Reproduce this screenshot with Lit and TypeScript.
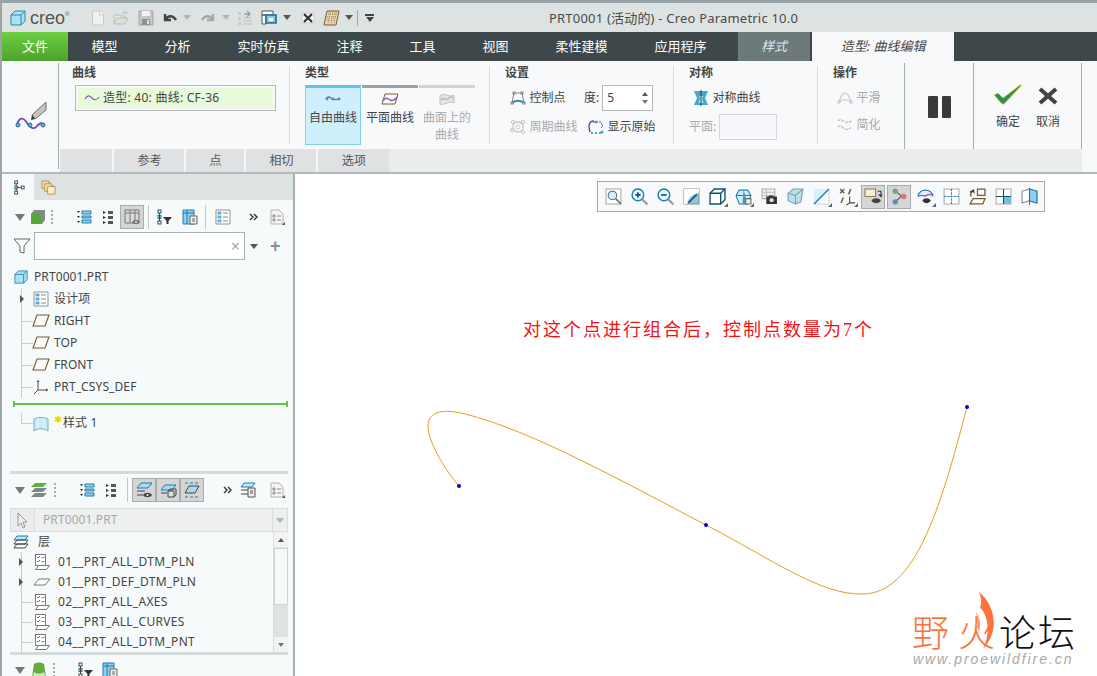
import { LitElement, html, css, svg, nothing } from "lit";
import { customElement } from "lit/decorators.js";

const blue = "#1f7fae";
const brown = "#7a5a2a";

// all icons live on a 16x16 box unless the size class scales them
const ic = (body: unknown, cls = "") => html`<svg class="ic ${cls}" viewBox="0 0 16 16">${body}</svg>`;

// a row of tools, each given by the x where it starts
const tools = (items: [unknown, number][]) =>
  items.map(([c, x], i) => {
    const next = items[i + 1] ? items[i + 1][1] : x + 24;
    return html`<span class="slot" style="width:${next - x}px">${c}</span>`;
  });

const icons = {
  cube: svg`<path d="M1 5l4-4h10v10l-4 4H1z" fill="#a9e2f7" stroke="#2a86ad"/><path d="M1 5h10v10M11 5l4-4" fill="none" stroke="#2a86ad"/>`,
  doc: svg`<path d="M2.500 1h7l4 4v10h-11z" fill="#f1f1ef" stroke="#c9c9c5"/><path d="M9.500 1v4h4" fill="#fff" stroke="#c9c9c5"/>`,
  open: svg`<path d="M1 14V5h5l1 1h5v2" fill="#e8e8e4" stroke="#bdbdb8"/><path d="M1 14l3-6h11l-3 6z" fill="#dededa" stroke="#bdbdb8"/><path d="M9 4l3-3v2h3" fill="none" stroke="#bdbdb8"/>`,
  save: svg`<path d="M1 1h14v14H1z" fill="#c4c7c8" stroke="#a2a5a6"/><path d="M4 1h8v5H4z" fill="#f1f1f1"/><path d="M4 9h8v6H4z" fill="#8f9394"/><path d="M9 10h2v4H9z" fill="#e2e2e2"/>`,
  undo: svg`<path d="M3 4v6h6M3.500 9.500C6 5 11 5 14 10" fill="none" stroke="#444" stroke-width="2.400"/>`,
  redo: svg`<path d="M13 4v6H7M12.500 9.500C10 5 5 5 2 10" fill="none" stroke="#a4a8a9" stroke-width="2.400"/>`,
  regen: svg`<path d="M1 2h3v3H1zM1 7h3v3H1zM1 12h3v3H1z" fill="#c8cbcb"/><path d="M6 8h9M6 11h9M6 14h9" stroke="#b9bcbc"/><path d="M7 4h6M10 1l3 3-3 3" fill="none" stroke="#9a9d9d" stroke-width="1.400"/>`,
  win: svg`<path d="M1 1h11v4H1zM1 5h4v9H1z" fill="#fff" stroke="#555"/><path d="M5 5h10v8H5z" fill="#8cc7e4" stroke="#1c6f99" stroke-width="1.600"/><path d="M8 8h4v3H8z" fill="#fff"/>`,
  closeWin: svg`<path d="M2 3h12v10H2z" fill="#f4f4f4" stroke="#ccc"/><path d="M4 4l8 8M12 4l-8 8" stroke="#333" stroke-width="2.200"/>`,
  grid: svg`<path d="M4 1h12l-3 14H1z" fill="#e9d9b4" stroke="${brown}"/><path d="M5 4h9M4 7h9M4 10h8M7 2l-2 12M10 2l-2 12M13 2l-2 12" stroke="#9d8354" stroke-dasharray="1 1"/>`,
  tilde: svg`<path d="M1 9c3-5 5-3 7-1s4 3 7-1" fill="none" stroke="#8e57c2" stroke-width="1.200"/>`,
  free: svg`<path d="M1 8c3-4 4-1 7 0s4 1 7-1" fill="none" stroke="#8e57c2" stroke-width="1.300"/><circle cx="2" cy="8" r="1" fill="#fff" stroke="${blue}"/><circle cx="8" cy="8" r="1" fill="#fff" stroke="${blue}"/><circle cx="14" cy="8" r="1" fill="#fff" stroke="${blue}"/>`,
  plane: svg`<path d="M3 3h13l-3 10H0z" fill="#fff" stroke="${brown}"/><path d="M1 10c3-5 5-2 7-1s4 1 7-3" fill="none" stroke="#8e57c2" stroke-width="1.400"/>`,
  onSurf: svg`<path d="M1 5c4-4 9 2 14-1v8c-5-3-10 3-14 1z" fill="#e6e6e6" stroke="#c2c2c2"/><path d="M2 9c3-4 5 1 7-1s3-3 5-1" fill="none" stroke="#b5b5b5" stroke-width="1.400"/>`,
  ctrl: svg`<path d="M2 13L4 3h8l2 10" fill="none" stroke="#666" stroke-width=".8"/><path d="M2 13c3-3 9-3 12 0" fill="none" stroke="#2a86ad" stroke-width="1.800"/><rect x="1" y="12" width="2" height="2" fill="#fff" stroke="#555" stroke-width=".7"/><rect x="13" y="12" width="2" height="2" fill="#fff" stroke="#555" stroke-width=".7"/><rect x="3" y="2" width="2" height="2" fill="#fff" stroke="#555" stroke-width=".7"/><rect x="11" y="2" width="2" height="2" fill="#fff" stroke="#555" stroke-width=".7"/>`,
  periodic: svg`<path d="M3 8c0-5 3-5 5-5s5 1 5 5-3 5-5 5-5-1-5-5z" fill="none" stroke="#c9c9c9" stroke-width="1.300"/><circle cx="3" cy="3" r="1.600" fill="none" stroke="#c4c4c4"/><circle cx="13" cy="3" r="1.600" fill="none" stroke="#c4c4c4"/><circle cx="2" cy="11" r="1.600" fill="none" stroke="#c4c4c4"/><circle cx="13" cy="13" r="1.600" fill="none" stroke="#c4c4c4"/><circle cx="8" cy="8" r="2" fill="none" stroke="#cfcfcf"/>`,
  orig: svg`<path d="M2 13C0 6 1 2 6 2" fill="none" stroke="#6b3fae" stroke-width="1.400"/><path d="M5 3h8" stroke="${blue}" stroke-dasharray="2 1"/><path d="M3 14h11" stroke="${blue}" stroke-dasharray="2 2" stroke-width="1.400"/><path d="M13 4c2 2 2 3 0 5" fill="none" stroke="#6b3fae"/><circle cx="8" cy="3" r="1" fill="#fff" stroke="${blue}"/><circle cx="14" cy="13" r="1" fill="#fff" stroke="${blue}"/>`,
  sym: svg`<path d="M1 1h14l-3 7 3 7H1l3-7z" fill="#3fa9d4"/><path d="M6 6h4l-1 2 1 5H6l1-5z" fill="#dff3fa"/><path d="M8 0v16" stroke="#333"/>`,
  smooth: svg`<path d="M2 12C4 5 6 3 8 3s4 2 6 9" fill="none" stroke="#c6c6c6" stroke-width="1.200"/><path d="M2 12c3-3 9-3 12 0" fill="none" stroke="#c6c6c6"/><circle cx="2" cy="12" r="1.200" fill="#fff" stroke="#bbb"/><circle cx="14" cy="12" r="1.200" fill="#fff" stroke="#bbb"/>`,
  simple: svg`<path d="M1 4c3-3 4 0 7 1s4 0 7-1M1 10c3-3 4 1 7 2s4 0 7-2" fill="none" stroke="#bdbdbd" stroke-width="1.200" stroke-dasharray="3 1"/>`,
  tree: svg`<rect x="4" y="1" width="3" height="3" fill="#fff" stroke="#444"/><rect x="4" y="12" width="3" height="3" fill="#fff" stroke="#444"/><rect x="4" y="6.500" width="3" height="3" fill="#fff" stroke="#1f7fae"/><rect x="11" y="6.500" width="3" height="3" fill="#fff" stroke="#444"/><path d="M5.500 4v8M7 8h4" stroke="#444"/>`,
  folders: svg`<path d="M1 1h7v2h2v6H1z" fill="#f3dca6" stroke="#b29654"/><path d="M4 4h7v2h2v6H4z" fill="#f6e3b6" stroke="#b29654"/><path d="M7 7h8v8H7z" fill="#fbeecb" stroke="#b29654"/>`,
  solid: svg`<path d="M1 5l3-4h11v10l-3 4H1z" fill="#7e8a8d"/><path d="M1 5h11v10H1z" fill="#58a832"/>`,
  list: svg`<path d="M6 2h9v3H6zM6 7h9v2H6zM6 11h9v3H6z" fill="#8fd0ee" stroke="#1f7fae"/><path d="M1 2h3l-1.500 2zM1 7h3l-1.500 2zM1 12h3l-1.500 2z" fill="#333"/>`,
  list2: svg`<path d="M8 2h5v3H8zM8 7h5v3H8zM8 12h5v3H8z" fill="#555"/><path d="M3 2l3 1.500L3 5zM3 7l3 1.500L3 10zM3 12l3 1.500L3 15z" fill="#333"/>`,
  cols: svg`<path d="M1 1h14v13H1z" fill="#d8dcdc" stroke="#777"/><path d="M1 4h14M6 1v13M11 1v13" stroke="#777"/><path d="M8 13c2-3 6-3 8 0-2 3-6 3-8 0z" fill="#777"/><circle cx="12" cy="13" r="1" fill="#ddd"/>`,
  treeFilter: svg`<rect x="1" y="1" width="3" height="3" fill="#fff" stroke="#444"/><rect x="1" y="6.500" width="3" height="3" fill="#8fd0ee" stroke="${blue}"/><rect x="1" y="12" width="3" height="3" fill="#fff" stroke="#444"/><path d="M2.500 4v8" stroke="#444"/><path d="M6 8h9l-3.500 4v3h-2v-3z" fill="#333"/>`,
  colsDoc: svg`<path d="M1 1h11v14H1z" fill="#8fd0ee" stroke="${blue}"/><path d="M1 4h11M5 1v14" stroke="${blue}"/><path d="M8 7h7v8H8z" fill="#eee" stroke="#666"/><path d="M10 10h3M10 12h3" stroke="#666"/>`,
  detail: svg`<path d="M1 1h14v14H1z" fill="#fff" stroke="#8a9496"/><rect x="3" y="3" width="3" height="2" fill="#8fd0ee" stroke="${blue}" stroke-width=".6"/><rect x="3" y="7" width="3" height="2" fill="#8fd0ee" stroke="${blue}" stroke-width=".6"/><rect x="3" y="11" width="3" height="2" fill="#8fd0ee" stroke="${blue}" stroke-width=".6"/><path d="M8 4h5M8 8h5M8 12h5" stroke="#888"/>`,
  more: svg`<path d="M4 5l3 3-3 3M8 5l3 3-3 3" fill="none" stroke="#333" stroke-width="1.400"/>`,
  sheet: svg`<path d="M2 1h8l4 4v10H2z" fill="#f4f4f2" stroke="#aeb2b2"/><path d="M4 6h2v2H4zM4 10h2v2H4z" fill="none" stroke="#888"/><path d="M8 7h4M8 11h4" stroke="#888"/><path d="M16 13v3h-3z" fill="#555"/>`,
  funnel: svg`<path d="M0 1h16l-6 7v7l-4-1V8z" fill="#fff" stroke="#666"/>`,
  datum: svg`<path d="M4 2h12l-4 11H0z" fill="none" stroke="${brown}" stroke-width="1.100"/>`,
  csys: svg`<path d="M5 2v9M5 11h10M5 11l-4 4" fill="none" stroke="#5e4a2c"/><path d="M3.500 3l1.500-2 1.500 2M13 9.500l2 1.500-2 1.500" fill="#5e4a2c"/>`,
  style: svg`<path d="M1 3c4-2 10-2 14 0v12c-4-3-10-3-14 0z" fill="#c7ecf8" stroke="#7ca9bc"/><path d="M5 2v10M11 2v10" stroke="#e7f8fd"/>`,
  layers: svg`<path d="M4 1h12l-4 4H0z" fill="#63ad3c"/><path d="M4 6h12l-4 4H0z" fill="#7c8789"/><path d="M4 11h12l-4 4H0z" fill="#7c8789"/>`,
  layerLine: svg`<path d="M4 2h11l-3 4H1z" fill="#bfe6f5" stroke="${blue}"/><path d="M4 6h11l-3 4H1zM4 10h11l-3 4H1z" fill="none" stroke="#444"/>`,
  layerEye: svg`<path d="M5 1h11l-4 5H1z" fill="#a5dcf2" stroke="${blue}"/><path d="M1 9h8M1 13h6" stroke="#444"/><path d="M7 13c2-3 7-3 9 0-2 3-7 3-9 0z" fill="#444"/><circle cx="11.500" cy="13" r="1" fill="#fff"/>`,
  layerBox: svg`<path d="M5 3h11l-4 5H1z" fill="#a5dcf2" stroke="${blue}"/><path d="M1 11h6" stroke="#444"/><path d="M8 9h6v6H8z" fill="#ddd" stroke="#444"/><path d="M8 9l2-2h6v6l-2 2" fill="none" stroke="#444"/>`,
  layerDash: svg`<path d="M1 1h14M1 15h14" stroke="${blue}" stroke-width="1.200" stroke-dasharray="3 2"/><path d="M5 4h10l-4 7H1z" fill="#a5dcf2" stroke="#444"/>`,
  layerDoc: svg`<path d="M4 1h11l-3 4H1z" fill="#bfe6f5" stroke="${blue}"/><path d="M1 8h7M1 12h7" stroke="#444"/><path d="M8 6h7v9H8z" fill="#eee" stroke="#555"/><path d="M10 9h3M10 11h3" stroke="#555"/>`,
  pick: svg`<path d="M3 1l9 9H8l2 5-2 1-2-5-3 3z" fill="#eee" stroke="#999"/>`,
  check: svg`<path d="M1.500 .5h10v11h-10z" fill="#fff" stroke="#777"/><path d="M3 3l1 1 2-2M3 7l1 1 2-2" fill="none" stroke="${blue}"/><path d="M7.500 3.500h3M7.500 7.500h3" stroke="#888"/><path d="M4.500 11.500h11l-3 4h-11z" fill="#fff" stroke="#777"/>`,
  flatPlane: svg`<path d="M5 5h11l-5 6H0z" fill="#fff" stroke="#777"/>`,
  stack: svg`<path d="M3 2c3-2 7-2 10 0l2 13-3-3H4l-3 3z" fill="#63ad3c"/><path d="M3 10c3 2 7 2 10 0l2 6H1z" fill="#cfe8c0"/>`,
  zoomWin: svg`<path d="M1 1h14v14H1z" fill="#fff" stroke="#aaa"/><circle cx="7" cy="7" r="4" fill="#d6f0fa" stroke="#4c6e7d"/><path d="M10 10l5 5" stroke="#777" stroke-width="1.800"/>`,
  zoomIn: svg`<circle cx="6.500" cy="6.500" r="5.500" fill="#e8f7fd" stroke="${blue}" stroke-width="1.300"/><path d="M4 6.500h5M6.500 4v5" stroke="#14506e" stroke-width="1.600"/><path d="M10.500 10.500l5 5" stroke="#999" stroke-width="2"/>`,
  zoomOut: svg`<circle cx="6.500" cy="6.500" r="5.500" fill="#e8f7fd" stroke="${blue}" stroke-width="1.300"/><path d="M4 6.500h5" stroke="#14506e" stroke-width="1.600"/><path d="M10.500 10.500l5 5" stroke="#999" stroke-width="2"/>`,
  refit: svg`<path d="M1 1h14v14H1z" fill="#8fc6dc" stroke="#888"/><path d="M1 1h14v4C9 5 5 9 4 15H1z" fill="#fff"/><path d="M5 14l8-8" stroke="#14506e" stroke-width="1.400"/>`,
  box: svg`<path d="M1 5l4-4h10v10l-4 4H1z" fill="#fff" stroke="#14506e" stroke-width="1.300"/><path d="M1 5h10v10M11 5l4-4" fill="none" stroke="#14506e" stroke-width="1.300"/>`,
  views: svg`<path d="M1 7l3-5h8l3 5-3 8H4z" fill="#d6f0fa" stroke="${blue}"/><path d="M1 7h14" stroke="${blue}"/><path d="M8 2l2 5v8H7z" fill="#4b9ac2"/><path d="M10 10h5v5h-5z" fill="#eee" stroke="#666"/>`,
  camera: svg`<path d="M1 1h12v9H1z" fill="#f3f3f3" stroke="#aaa"/><path d="M1 4h12M1 7h12M5 1v9" stroke="#bbb"/><path d="M5 8h2l1-1h3l1 1h3v7H5z" fill="#333"/><circle cx="10" cy="11.500" r="2" fill="#ddd"/>`,
  persp: svg`<path d="M1 5l5-4h9l-2 12-5 2-7-3z" fill="#bcdfed" stroke="#7a9fae"/><path d="M1 5l7 2v8M8 7l7-6" fill="none" stroke="#7a9fae"/>`,
  section: svg`<path d="M1 15L15 1v14z" fill="#fff" stroke="#aaa" stroke-dasharray="1 1"/><path d="M1 1h14v1L2 15H1z" fill="#d6f0fa"/><path d="M1 15L15 1" stroke="${blue}" stroke-width="1.300"/>`,
  datums: svg`<path d="M1 1l4 4M5 1L1 5" stroke="${brown}" stroke-width="1.300"/><path d="M11 1L9 6M4 9L2 14" stroke="${brown}" stroke-width="1.400"/><path d="M10 8v6h5M10 14l-3 2" fill="none" stroke="#444"/>`,
  disp: svg`<path d="M0 1h10v7H0z" fill="#f6edd4" stroke="#8b7a55"/><path d="M12 3h3v5M13 6l2 2 1-2" fill="none" stroke="#333"/><path d="M6 12c2-3 7-3 9 0-2 3-7 3-9 0z" fill="#444"/>`,
  nodes: svg`<path d="M4 3l6 4.500L4 13" fill="none" stroke="#555"/><circle cx="4" cy="3" r="2.500" fill="#71a870"/><circle cx="12" cy="8" r="2.500" fill="#dc7474"/><circle cx="4" cy="13" r="2.500" fill="#5193b8"/>`,
  ann: svg`<path d="M1 8c0-4 4-6 7-6s7 2 7 6" fill="#e5f4fb" stroke="${blue}"/><path d="M1 8c4-3 5 1 8-1s3-1 6 0" fill="none" stroke="#8e57c2" stroke-width="1.300"/><path d="M5 12c2-3 6-3 8 0-2 3-6 3-8 0z" fill="#333"/>`,
  spin: svg`<path d="M1 1h14v14H1z" fill="#fff" stroke="#aaa"/><path d="M8 1v14M1 8h14" stroke="${blue}" stroke-dasharray="2 1"/>`,
  swap: svg`<path d="M8 1h7v6H8z" fill="#fff" stroke="${brown}" stroke-width="1.200"/><path d="M4 10h11l-2 5H1z" fill="#fff" stroke="${brown}" stroke-width="1.200"/><path d="M5 2C2 3 1 6 2 8M1 4l3-2 1 3" fill="none" stroke="#333"/>`,
  split: svg`<path d="M1 1h14v14H1z" fill="#fff" stroke="#aaa"/><path d="M8 8h7v7H8z" fill="#74bfe0"/><path d="M8 1v14M1 8h14" stroke="#14506e"/>`,
  dir: svg`<path d="M1 3c3-1 5-1 7-2 2 1 4 1 7 2v11c-3-1-5-1-7-2-2 1-4 1-7 2z" fill="#fff" stroke="#888"/><path d="M8 1c2 1 4 1 7 2v11c-3-1-5-1-7-2z" fill="#8fd0ee" stroke="${blue}"/><path d="M8 0v16" stroke="${brown}"/>`,
};

const dd = html`<i class="dd"></i>`;
const ddOff = html`<i class="dd off"></i>`;
const down = html`<i class="dn"></i>`;
const dots = html`<i class="dots"></i>`;
const vs = html`<i class="vs"></i>`;
const act = (icon: unknown) => html`<div class="act">${ic(icon)}</div>`;

@customElement("app-root")
export class AppRoot extends LitElement {
  static styles = css`
    :host {
      display: block;
      width: 1097px;
      height: 676px;
      overflow: hidden;
      background: #fff;
      color: #444;
      font: 12px/16px "Noto Sans", "Noto Sans CJK SC", sans-serif;
    }
    * { box-sizing: border-box; }
    .ic { display: block; width: 16px; height: 16px; flex: none; overflow: visible; }
    .slot { display: flex; align-items: center; flex: none; height: 100%; white-space: nowrap; }
    .dd { display: block; width: 0; height: 0; border: 4px solid transparent; border-top: 5px solid #555; border-bottom: 0; flex: none; }
    .dd.off { border-top-color: #b0b4b4; }
    .app { display: flex; flex-direction: column; height: 676px; border-top: 3px solid #98a3a7; border-left: 2px solid #9ea4a6; }

    /* title bar */
    .title { height: 29px; background: #dde3e2; display: flex; flex: none; }
    .creo { font: 18px/20px "Liberation Sans", sans-serif; color: #555; }
    .creo sup { font-size: 6px; line-height: 0; vertical-align: 8px; }
    .sep { display: block; width: 1px; height: 16px; background: #a0a6a6; }
    .custom { display: flex; flex-direction: column; align-items: center; gap: 1px; width: 9px; border-top: 2px solid #444; padding-top: 1px; }
    .custom i { display: block; width: 0; height: 0; border: 4px solid transparent; border-top: 5px solid #444; border-bottom: 0; }
    .apptitle { font-size: 13px; color: #4a4a4a; letter-spacing: 0.2px; }

    /* tabs */
    .tabs { height: 29px; background: #3e4749; display: flex; flex: none; }
    .tab { color: #fff; font-size: 13px; line-height: 29px; padding: 0 23.5px; white-space: nowrap; }
    .tab.file { width: 66px; padding: 0; text-align: center; background: linear-gradient(#6dcf3f, #4ca32c); }
    .tab.kind { width: 72px; padding: 0; margin-left: 8px; margin-right: 2px; text-align: center; background: #6c7a7c; font-style: italic; color: #dfe4e4; }
    .tab.on { width: 142px; padding: 0; text-align: center; background: #f8f9fb; color: #444; font-style: italic; }

    /* ribbon */
    .ribbon { height: 113px; flex: none; display: flex; background: #f8f9fb; border-bottom: 2px solid #b4babb; }
    .rb-icon { width: 57px; margin-top: 2px; display: flex; align-items: center; justify-content: center; border-right: 1px solid #a9acad; height: 106px; padding: 2px 0 0 2px; }
    .rb-icon svg { width: 32px; height: 32px; }
    .rb-main { width: 1022px; margin-left: 1px; display: flex; flex-direction: column; }
    .groups { height: 88px; display: flex; }
    .group { padding: 0 0 0 15px; margin-top: 5px; height: 78px; border-right: 1px solid #d9dbdc; }
    .group h4 { margin: 0; font-size: 12px; line-height: 14px; font-weight: 700; color: #444; }
    .g-curve { width: 230px; padding-left: 12px; }
    .g-type { width: 200px; }
    .g-set { width: 184px; }
    .g-sym { width: 144px; }
    .g-ops { width: 86px; border-right: 0; }
    .g-side { height: 86px; margin-top: 2px; border-left: 1px solid #a9acad; }
    .g-pause { width: 69px; display: flex; align-items: center; justify-content: center; gap: 4px; padding: 1px 0 0 1px; }
    .g-pause i { display: block; width: 9.500px; height: 22px; background: #3a3a3a; border-radius: 1px; }
    .g-ok { width: 109px; border-right: 1px solid #a9acad; display: flex; padding: 21px 0 0 19px; gap: 10px; }
    .okbtn { width: 30px; display: flex; flex-direction: column; align-items: center; gap: 9px; line-height: 16px; }
    .okbtn svg { width: 30px; height: 21px; }
    .okbtn.x svg { width: 20px; height: 21px; }
    .picked { margin: 5px 0 0 3px; width: 201px; height: 26px; border: 1px solid #b5b8b8; padding: 2px; }
    .picked div { height: 20px; background: #e9fadb; display: flex; align-items: center; padding-left: 6px; gap: 3px; letter-spacing: 0.25px; }
    .types { display: flex; margin-top: 5px; gap: 1px; }
    .type { width: 56px; height: 60px; border-top: 3px solid #a0a2a2; display: flex; flex-direction: column; align-items: center; padding-top: 3px; text-align: center; line-height: 17px; }
    .type svg { margin-bottom: 2px; }
    .type.on { background: #d0effd; border: 1px solid #7fcfee; border-top: 3px solid #63c3ef; }
    .type.off { border-top-color: #d2d3d3; color: #aaa; }
    .set { display: grid; grid-template-columns: 74px 85px; row-gap: 3px; margin: 5px 0 0 5px; align-items: center; }
    .cmd { display: flex; align-items: center; gap: 3.5px; white-space: nowrap; height: 26px; }
    .cmd.off { color: #aaa; }
    .cmd.shift { margin-left: 4px; }
    .spinrow { gap: 3px; }
    .spinner { width: 51px; height: 26px; border: 1px solid #b5b8b8; background: #fff; display: flex; align-items: center; justify-content: space-between; padding: 0 4px; }
    .spinner span { display: flex; flex-direction: column; gap: 4px; }
    .up { display: block; width: 0; height: 0; border: 3px solid transparent; border-bottom: 4px solid #555; border-top: 0; }
    .down { display: block; width: 0; height: 0; border: 3px solid transparent; border-top: 4px solid #777; border-bottom: 0; }
    .pad-sym { margin: 5px 0 0 4px; }
    .planefield { display: flex; align-items: center; gap: 3px; color: #aaa; margin-top: 3px; }
    .planefield i { display: block; width: 58px; height: 26px; background: #f8f6fc; border: 1px solid #d8d8d8; }
    .ops { padding-left: 4px; display: flex; flex-direction: column; gap: 1px; margin-top: 5px; }
    .strip { height: 23px; display: flex; background: #ebecee; }
    .strip div { background: #e0e1e3; border-right: 2px solid #f4f5f6; text-align: center; line-height: 23px; color: #555; padding-left: 1px; }
    .strip .s0 { width: 54px; }
    .strip .s1 { width: 72px; }
    .strip .s2 { width: 60px; }
    .strip .s3 { width: 72px; }
    .strip .s4 { width: 71px; border-right: 0; }

    /* main */
    .main { flex: 1; display: flex; min-height: 0; }
    .panel { width: 293px; flex: none; background: #f7fafb; border-right: 2px solid #a8aeaf; display: flex; flex-direction: column; overflow: hidden; letter-spacing: 0.1px; }
    .ptabs { height: 26px; background: #dde3e2; display: flex; flex: none; }
    .ptab { width: 32px; display: flex; align-items: center; justify-content: center; }
    .ptab.on { background: #f7fafb; }
    .ptab .ic { width: 15px; height: 17px; }
    .ptab + .ptab { margin-left: 1px; width: 26px; }
    .tb { display: flex; flex: none; }
    .tb1 { height: 28px; margin-top: 3px; }
    .tb2 { height: 26px; margin-top: 3px; }
    .tb3 { height: 20px; margin-top: 5px; }
    .dn { display: block; width: 0; height: 0; border: 5px solid transparent; border-top: 7px solid #777; border-bottom: 0; }
    .dots { display: block; width: 2px; height: 14px; background: repeating-linear-gradient(#aaa 0 2px, transparent 2px 4px); }
    .vs { display: block; width: 1px; height: 24px; background: #c3c8c9; }
    .act { width: 24px; height: 24px; background: #d3d5d6; border: 1px solid #a9acad; display: flex; align-items: center; justify-content: center; }
    .filter { display: flex; align-items: center; height: 30px; flex: none; padding-left: 12px; }
    .filterbox { position: relative; margin-left: 4px; width: 211px; height: 28px; border: 1px solid #a7b3b3; background: #fff; }
    .clear { position: absolute; right: 4px; top: 3px; color: #9aa; font-size: 16px; line-height: 20px; }
    .filter .dd { margin-left: 5px; }
    .plus { margin-left: 12px; color: #8a8e8e; font: 700 18px/18px "Liberation Sans", sans-serif; }
    .root { display: flex; align-items: center; height: 22px; padding-left: 12px; gap: 6px; margin-top: 5px; flex: none; }
    .root .ic { width: 14px; height: 14px; }
    .kids { margin-left: 19px; border-left: 1px solid #c9cdce; height: 110px; flex: none; }
    .row { display: flex; align-items: center; height: 22px; position: relative; padding-left: 11px; gap: 5px; white-space: nowrap; }
    .row::before { content: ""; width: 11px; height: 1px; background: #c9cdce; position: absolute; left: 0; top: 11px; }
    .row.exp::before { display: none; }
    .arrow { position: absolute; left: -2px; top: 7px; border: 4px solid transparent; border-left: 4px solid #555; border-right: 0; }
    .greenline { height: 2px; margin: 5px 0 0 11px; width: 275px; background: #6cc04a; flex: none; position: relative; }
    .greenline::before, .greenline::after { content: ""; position: absolute; top: -2px; width: 2px; height: 6px; background: #6cc04a; }
    .greenline::before { left: 0; }
    .greenline::after { right: 0; }
    .stylerow { display: flex; align-items: center; height: 22px; margin: 7px 0 0 19px; flex: none; }
    .stylerow .cnr { width: 12px; height: 11px; border: solid #c9cdce; border-width: 0 0 1px 1px; margin-top: -10px; }
    .stylerow .ic { height: 18px; margin: 2px 0 0 0; }
    .star { color: #e7d800; font-size: 10px; line-height: 8px; align-self: flex-start; margin: 3px 0 0 5px; width: 9px; }
    .sash { height: 3px; background: #d5dadb; margin: 0 0 0 8px; width: 278px; flex: none; }
    .sash.a { margin-top: 37px; }
    .selrow { margin: 5px 0 0 8px; width: 278px; height: 24px; display: flex; background: #eef0f0; border: 1px solid #d8dcdc; color: #a4a8a8; flex: none; }
    .selrow .p { width: 24px; display: flex; align-items: center; justify-content: center; background: #e9ebec; border-right: 1px solid #d8dcdc; }
    .selrow .n { flex: 1; line-height: 22px; padding-left: 8px; }
    .selrow .d { width: 15px; display: flex; align-items: center; justify-content: center; border-left: 1px solid #d8dcdc; }
    .layerlist { margin-left: 8px; width: 278px; height: 120px; background: #f7fafb; display: flex; flex: none; overflow: hidden; }
    .ll { flex: 1; }
    .lhead { display: flex; align-items: center; height: 20px; padding-left: 3px; gap: 9px; }
    .lrow { display: flex; align-items: center; height: 20px; margin-left: 11px; padding-left: 12px; gap: 8px; border-left: 1px solid #c9cdce; white-space: nowrap; position: relative; letter-spacing: 0.32px; }
    .lrow::before { content: ""; width: 11px; height: 1px; background: #c9cdce; position: absolute; left: 0; top: 10px; }
    .lrow.exp::before { display: none; }
    .lrow .arrow { left: -3px; top: 6px; }
    .scroll { width: 15px; background: #dfe2e3; border-left: 1px solid #d8dcdc; display: flex; flex-direction: column; }
    .scroll .b { height: 15px; background: #f2f4f4; display: flex; align-items: center; justify-content: center; flex: none; }
    .scroll .th { height: 57px; background: #f7f8f8; border: 1px solid #cfd3d3; flex: none; margin-top: 1px; }
    .scroll .sp { flex: 1; }

    /* canvas */
    .canvas { flex: 1; position: relative; background: #fff; overflow: hidden; }
    .curve { position: absolute; left: 0; top: 0; width: 802px; height: 502px; }
    .graphbar { position: absolute; left: 302px; top: 7px; height: 31px; width: 448px; display: flex; align-items: center; padding-left: 2px; background: #f7f9fa; border: 1px solid #a8a8a8; }
    .graphbar div { width: 26px; height: 24px; display: flex; align-items: center; justify-content: center; flex: none; position: relative; }
    .graphbar div.act { width: 24px; margin: 0 1px; }
    .graphbar .ic { width: 17px; height: 17px; }
    .graphbar .more::after { content: ""; position: absolute; right: 2px; bottom: 2px; border: 2px solid transparent; border-right-color: #666; border-bottom-color: #666; }
    .note { position: absolute; left: 228px; top: 144px; color: #f01414; font: 18px/24px "Liberation Serif", "Noto Sans CJK SC", serif; letter-spacing: 2px; white-space: nowrap; }
    .mark { position: absolute; left: 617px; top: 437px; width: 180px; height: 66px; }
    .cn { position: absolute; top: 0; font: 300 37px/40px "Noto Sans CJK SC", sans-serif; white-space: nowrap; }
    .cn.hot { left: 0; color: #fb7440; letter-spacing: 9px; }
    .cn.blk { left: 87px; color: #111; letter-spacing: 2px; }
    .mark svg { position: absolute; left: 64px; top: -19px; width: 20px; height: 58px; }
    .url { position: absolute; left: 1px; top: 41px; color: #a9a9a9; font: italic 14px/15px "Liberation Sans", sans-serif; letter-spacing: 1.930px; white-space: nowrap; }
  `;

  private cmd(icon: unknown, label: string, off = false) {
    return html`<div class="cmd ${off ? "off" : ""}">${ic(icon)}<span>${label}</span></div>`;
  }

  private ribbon() {
    return html`
      <div class="ribbon">
        <div class="rb-icon">
          <svg viewBox="0 0 32 32">
            <path d="M2 23c3-8 7-6 10-1s7 7 10 3c2-2 3-3 5-3" fill="none" stroke="#7c45b8" stroke-width="1.800"/>
            <circle cx="3" cy="24" r="2" fill="#5fb6dc" stroke="#1f6f96"/><circle cx="15" cy="24" r="2" fill="#5fb6dc" stroke="#1f6f96"/><circle cx="28" cy="24" r="2" fill="#5fb6dc" stroke="#1f6f96"/>
            <path d="M17 14L31 1v8L20 18z" fill="#c9c3bd" stroke="#6d6d6d"/><path d="M16 19l1-5 3 4z" fill="#333"/>
          </svg>
        </div>
        <div class="rb-main">
          <div class="groups">
            <div class="group g-curve">
              <h4>曲线</h4>
              <div class="picked"><div>${ic(icons.tilde)}<span>造型: 40: 曲线: CF-36</span></div></div>
            </div>
            <div class="group g-type">
              <h4>类型</h4>
              <div class="types">
                <div class="type on">${ic(icons.free)}<span>自由曲线</span></div>
                <div class="type">${ic(icons.plane)}<span>平面曲线</span></div>
                <div class="type off">${ic(icons.onSurf)}<span>曲面上的<br />曲线</span></div>
              </div>
            </div>
            <div class="group g-set">
              <h4>设置</h4>
              <div class="set">
                ${this.cmd(icons.ctrl, "控制点")}
                <div class="cmd spinrow"><span>度:</span><div class="spinner">5<span><i class="up"></i><i class="down"></i></span></div></div>
                ${this.cmd(icons.periodic, "周期曲线", true)}
                <div class="cmd shift">${ic(icons.orig)}<span>显示原始</span></div>
              </div>
            </div>
            <div class="group g-sym">
              <h4>对称</h4>
              <div class="cmd pad-sym">${ic(icons.sym)}<span>对称曲线</span></div>
              <div class="planefield"><span>平面:</span><i></i></div>
            </div>
            <div class="group g-ops">
              <h4>操作</h4>
              <div class="ops">${this.cmd(icons.smooth, "平滑", true)}${this.cmd(icons.simple, "简化", true)}</div>
            </div>
            <div class="g-side g-pause"><i></i><i></i></div>
            <div class="g-side g-ok">
              <div class="okbtn">
                <svg viewBox="0 0 30 21"><path d="M1 11l4-2 5 5L27 1h2L11 20H9z" fill="#2f8f52" stroke="#d8d23a"/></svg>
                <span>确定</span>
              </div>
              <div class="okbtn x">
                <svg viewBox="0 0 20 21"><path d="M2 5l16 14M18 5L2 19" stroke="#444" stroke-width="4"/></svg>
                <span>取消</span>
              </div>
            </div>
          </div>
          <div class="strip">
            <div class="s0"></div><div class="s1">参考</div><div class="s2">点</div><div class="s3">相切</div><div class="s4">选项</div>
          </div>
        </div>
      </div>
    `;
  }

  private modelTree() {
    const datums = ["RIGHT", "TOP", "FRONT"];
    return html`
      <div class="ptabs">
        <div class="ptab on">${ic(icons.tree)}</div>
        <div class="ptab">${ic(icons.folders)}</div>
      </div>
      <div class="tb tb1">
        ${tools([
          [nothing, 2], [down, 15], [ic(icons.solid), 30], [dots, 51], [ic(icons.list), 76], [ic(icons.list2), 100],
          [act(icons.cols), 120], [vs, 148], [ic(icons.treeFilter), 157], [ic(icons.colsDoc), 182], [vs, 205],
          [ic(icons.detail), 215], [ic(icons.more), 246], [ic(icons.sheet), 269],
        ])}
      </div>
      <div class="filter">
        ${ic(icons.funnel)}
        <div class="filterbox"><span class="clear">×</span></div>
        <i class="dd"></i><span class="plus">+</span>
      </div>
      <div class="root">${ic(icons.cube)}<span>PRT0001.PRT</span></div>
      <div class="kids">
        <div class="row exp"><i class="arrow"></i>${ic(icons.detail)}<span>设计项</span></div>
        ${datums.map((d) => html`<div class="row">${ic(icons.datum)}<span>${d}</span></div>`)}
        <div class="row">${ic(icons.csys)}<span>PRT_CSYS_DEF</span></div>
      </div>
      <div class="greenline"></div>
      <div class="stylerow"><i class="cnr"></i>${ic(icons.style)}<span class="star">✱</span><span>样式 1</span></div>
    `;
  }

  private layerTree() {
    const rows = [
      ["01__PRT_ALL_DTM_PLN", icons.check, true],
      ["01__PRT_DEF_DTM_PLN", icons.flatPlane, true],
      ["02__PRT_ALL_AXES", icons.check, false],
      ["03__PRT_ALL_CURVES", icons.check, false],
      ["04__PRT_ALL_DTM_PNT", icons.check, false],
    ] as const;
    return html`
      <div class="sash a"></div>
      <div class="tb tb2">
        ${tools([
          [nothing, 2], [down, 15], [ic(icons.layers), 31], [dots, 54], [ic(icons.list), 79], [ic(icons.list2), 103],
          [vs, 127], [act(icons.layerEye), 132], [act(icons.layerBox), 156], [act(icons.layerDash), 180],
          [ic(icons.more), 220], [ic(icons.layerDoc), 240], [ic(icons.sheet), 269],
        ])}
      </div>
      <div class="selrow">
        <div class="p">${ic(icons.pick)}</div>
        <div class="n">PRT0001.PRT</div>
        <div class="d">${ddOff}</div>
      </div>
      <div class="layerlist">
        <div class="ll">
          <div class="lhead">${ic(icons.layerLine)}<span>层</span></div>
          ${rows.map(
            ([name, icon, exp]) => html`
              <div class="lrow ${exp ? "exp" : ""}">
                ${exp ? html`<i class="arrow"></i>` : ""}${ic(icon)}<span>${name}</span>
              </div>
            `
          )}
        </div>
        <div class="scroll">
          <div class="b"><i class="up"></i></div>
          <div class="th"></div>
          <div class="sp"></div>
          <div class="b"><i class="down"></i></div>
        </div>
      </div>
      <div class="sash"></div>
      <div class="tb tb3">
        ${tools([[nothing, 2], [down, 15], [ic(icons.stack), 31], [dots, 53], [ic(icons.treeFilter), 78], [ic(icons.colsDoc), 102]])}
      </div>
    `;
  }

  private graphBar() {
    const items: [unknown, string][] = [
      [icons.zoomWin, ""], [icons.zoomIn, ""], [icons.zoomOut, ""], [icons.refit, ""],
      [icons.box, "more"], [icons.views, "more"], [icons.camera, ""], [icons.persp, ""],
      [icons.section, "more"], [icons.datums, "more"], [icons.disp, "act"], [icons.nodes, "act"],
      [icons.ann, "more"], [icons.spin, ""], [icons.swap, ""], [icons.split, ""], [icons.dir, ""],
    ];
    return html`<div class="graphbar">${items.map(([i, c]) => html`<div class=${c}>${ic(i)}</div>`)}</div>`;
  }

  render() {
    const tabs = ["模型", "分析", "实时仿真", "注释", "工具", "视图", "柔性建模", "应用程序"];
    return html`
      <div class="app">
        <div class="title">
          ${tools([
            [nothing, 2], [ic(icons.cube), 10], [html`<span class="creo">creo<sup>®</sup></span>`, 30],
            [ic(icons.doc), 90], [ic(icons.open), 113], [ic(icons.save), 138], [ic(icons.undo), 162], [ddOff, 183],
            [ic(icons.redo), 200], [ddOff, 222], [ic(icons.regen), 237], [ic(icons.win), 261], [dd, 283],
            [ic(icons.closeWin), 300], [ic(icons.grid), 323], [dd, 345], [html`<i class="sep"></i>`, 357],
            [html`<div class="custom"><i></i></div>`, 365],
            [html`<span class="apptitle">PRT0001 (活动的) - Creo Parametric 10.0</span>`, 549],
          ])}
        </div>
        <div class="tabs">
          <div class="tab file">文件</div>
          ${tabs.map((t) => html`<div class="tab">${t}</div>`)}
          <div class="tab kind">样式</div>
          <div class="tab on">造型: 曲线编辑</div>
        </div>
        ${this.ribbon()}
        <div class="main">
          <div class="panel">${this.modelTree()}${this.layerTree()}</div>
          <div class="canvas">
            <svg class="curve" viewBox="295 174 802 502">
              <path d="M459 486C445 470 427 440 428 425C429 410 445 409 465 414C530 430 620 480 706 525C770 558 820 595 862 594C915 594 940 510 967 407" fill="none" stroke="#f09a17" stroke-width="1"/>
              <circle cx="459" cy="486" r="2" fill="#0000e0"/>
              <circle cx="706" cy="525" r="2" fill="#0000e0"/>
              <circle cx="967" cy="407" r="2" fill="#0000e0"/>
            </svg>
            ${this.graphBar()}
            <div class="note">对这个点进行组合后，控制点数量为7个</div>
            <div class="mark">
              <div class="cn hot">野火</div>
              <div class="cn blk">论坛</div>
              <svg viewBox="0 0 20 58"><path d="M3 0c12 10 18 26 13 42-2 6-5 11-9 15 5-10 6-22 3-31C8 20 7 18 4 16 6 11 5 5 3 0z" fill="#fb7440"/><path d="M0 20c4 6 5 12 3 20-1-3-2-5-3-6 1-4 1-9 0-14z" fill="#fda070"/></svg>
              <div class="url">www.proewildfire.cn</div>
            </div>
          </div>
        </div>
      </div>
    `;
  }
}
